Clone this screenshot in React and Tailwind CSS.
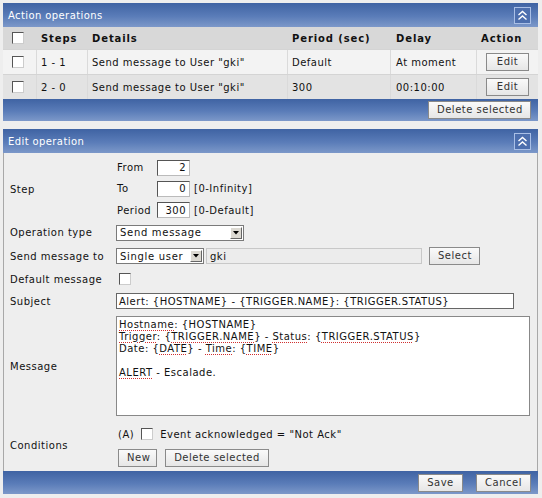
import React from "react";

const headGrad = "bg-[linear-gradient(to_bottom,#3f63a3,#5a7cb8_55%,#7c98c9)]";

function CollapseIcon() {
  return (
    <div className="w-[17px] h-[17px] border border-[#a9bfe6] bg-[#4d6fae] flex items-center justify-center">
      <svg width="11" height="11" viewBox="0 0 11 11" fill="none" stroke="white" strokeWidth="1.4">
        <path d="M1.5 5 L5.5 1.5 L9.5 5" />
        <path d="M1.5 9.5 L5.5 6 L9.5 9.5" />
      </svg>
    </div>
  );
}

function Btn({ children, className = "" }) {
  return (
    <button className={`h-[18px] px-[8px] border border-[#8a8a8a] bg-[linear-gradient(to_bottom,#fafafa,#e6e6e6)] text-[#333] tracking-[0.5px] leading-none whitespace-nowrap ${className}`}>
      {children}
    </button>
  );
}

function Check({ className = "" }) {
  return <span className={`inline-block w-[12px] h-[12px] bg-white border border-t-[#555] border-l-[#555] border-r-[#ccc] border-b-[#ccc] ${className}`} />;
}

function Select({ value, width }) {
  return (
    <div className={`h-[16px] bg-white border border-[#7a7a7a] flex items-center justify-between pl-[3px] pr-[1px] ${width}`}>
      <span className="tracking-[0.7px] whitespace-nowrap">{value}</span>
      <span className="w-[12px] h-[12px] bg-[#dcd9d2] border border-t-white border-l-white border-r-[#666] border-b-[#666] flex items-center justify-center">
        <svg width="6" height="4" viewBox="0 0 6 4"><path d="M0 0 H6 L3 3.5 Z" fill="#000" /></svg>
      </span>
    </div>
  );
}

function NumInput({ value }) {
  return (
    <div className="w-[33px] h-[16px] bg-white border border-t-[#555] border-l-[#555] border-r-[#bbb] border-b-[#bbb] flex items-center justify-end pr-[3px]">{value}</div>
  );
}

const sp = "underline decoration-dotted decoration-[#d03030] underline-offset-2";

const rows = [
  { steps: "1 - 1", details: 'Send message to User "gki"', period: "Default", delay: "At moment", bg: "bg-[#f3f3f3]" },
  { steps: "2 - 0", details: 'Send message to User "gki"', period: "300", delay: "00:10:00", bg: "bg-[#e3e3e3]" },
];

export default function App() {
  return (
    <div className="min-h-screen bg-[#eeeeee] p-[3px] font-['DejaVu_Sans',Verdana,sans-serif] text-[10px] text-[#111] w-[542px] tracking-[0.5px]">
      {/* Action operations */}
      <div className="w-[535px]">
        <div className={`h-[24px] ${headGrad} flex items-center justify-between pl-[5px] pr-[7px] text-white tracking-[0.4px]`}>
          <span>Action operations</span>
          <CollapseIcon />
        </div>
        <div className="flex h-[22px] items-center bg-[#d8d8d8] font-bold tracking-[0.9px]">
          <div className="w-[34px] pl-[9px] flex"><Check /></div>
          <div className="w-[51px] pl-[4px]">Steps</div>
          <div className="w-[200px] pl-[4px]">Details</div>
          <div className="w-[103px] pl-[4px]">Period (sec)</div>
          <div className="w-[86px] pl-[5px]">Delay</div>
          <div className="w-[61px] pl-[4px]">Action</div>
        </div>
        {rows.map((r, i) => (
          <div key={i} className={`flex h-[25px] items-stretch ${r.bg} border-t border-[#d4d4d4]`}>
            <div className="w-[34px] pl-[9px] flex items-center border-r border-[#dadada]"><Check /></div>
            <div className="w-[51px] pl-[4px] flex items-center border-r border-[#dadada]">{r.steps}</div>
            <div className="w-[200px] pl-[4px] flex items-center border-r border-[#dadada]">{r.details}</div>
            <div className="w-[103px] pl-[4px] flex items-center border-r border-[#dadada]">{r.period}</div>
            <div className="w-[86px] pl-[5px] flex items-center border-r border-[#dadada]">{r.delay}</div>
            <div className="w-[61px] flex items-center justify-center"><Btn className="w-[43px] px-0">Edit</Btn></div>
          </div>
        ))}
        <div className={`h-[22px] ${headGrad} flex items-center justify-end pr-[7px]`}>
          <Btn className="w-[103px] px-0">Delete selected</Btn>
        </div>
      </div>

      {/* Edit operation */}
      <div className="w-[535px] mt-[8px]">
        <div className={`h-[24px] ${headGrad} flex items-center justify-between pl-[5px] pr-[7px] text-white tracking-[0.4px]`}>
          <span>Edit operation</span>
          <CollapseIcon />
        </div>
        <div className="border-l border-r border-[#a8a8a8] bg-[#eeeeee] pt-[4px]">
          {/* Step */}
          <div className="flex">
            <div className="w-[112px] pl-[6px] flex items-center">Step</div>
            <div className="flex flex-col">
              <div className="h-[21px] flex items-center">
                <span className="w-[41px] pl-[1px]">From</span>
                <NumInput value="2" />
              </div>
              <div className="h-[21px] flex items-center">
                <span className="w-[41px] pl-[1px]">To</span>
                <NumInput value="0" />
                <span className="ml-[4px]">[0-Infinity]</span>
              </div>
              <div className="h-[22px] flex items-center">
                <span className="w-[41px] pl-[1px]">Period</span>
                <NumInput value="300" />
                <span className="ml-[4px]">[0-Default]</span>
              </div>
            </div>
          </div>
          <div className="flex h-[23px] items-center">
            <div className="w-[112px] pl-[6px]">Operation type</div>
            <Select value="Send message" width="w-[128px]" />
          </div>
          <div className="flex h-[24px] items-center">
            <div className="w-[112px] pl-[6px]">Send message to</div>
            <Select value="Single user" width="w-[88px]" />
            <div className="ml-[2px] w-[216px] h-[16px] bg-[#ececec] border border-[#c8c8c8] flex items-center pl-[3px]">gki</div>
            <Btn className="ml-[7px] w-[51px] px-0">Select</Btn>
          </div>
          <div className="flex h-[22px] items-center">
            <div className="w-[115px] pl-[6px]">Default message</div>
            <Check />
          </div>
          <div className="flex h-[22px] items-center">
            <div className="w-[112px] pl-[6px]">Subject</div>
            <div className="w-[398px] h-[16px] bg-white border border-[#666] flex items-center pl-[2px] whitespace-nowrap">
              Alert: {"{HOSTNAME}"} - {"{TRIGGER.NAME}"}: {"{TRIGGER.STATUS}"}
            </div>
          </div>
          <div className="flex h-[108px] items-center">
            <div className="w-[112px] pl-[6px]">Message</div>
            <div className="w-[414px] h-[100px] bg-white border border-[#888] px-[2px] pt-[2px] leading-[12px]">
              <div><span className={sp}>Hostname</span>: {"{HOSTNAME}"}</div>
              <div>
                <span className={sp}>Trigger</span>: {"{"}<span className={sp}>TRIGGER.NAME</span>{"}"} - <span className={sp}>Status</span>: {"{"}<span className={sp}>TRIGGER.STATUS</span>{"}"}
              </div>
              <div>
                Date: {"{"}<span className={sp}>DATE</span>{"}"} - <span className={sp}>Time</span>: {"{"}<span className={sp}>TIME</span>{"}"}
              </div>
              <div>&nbsp;</div>
              <div><span className={sp}>ALERT</span> - Escalade.</div>
            </div>
          </div>
          <div className="flex h-[51px] items-center">
            <div className="w-[114px] pl-[6px]">Conditions</div>
            <div className="flex flex-col h-full pt-[4px]">
              <div className="h-[20px] flex items-center">
                <span>(A)</span>
                <Check className="ml-[7px]" />
                <span className="ml-[7px]">Event acknowledged = "Not Ack"</span>
              </div>
              <div className="flex mt-[5px] gap-[8px]">
                <Btn className="w-[39px] px-0">New</Btn>
                <Btn className="w-[104px] px-0">Delete selected</Btn>
              </div>
            </div>
          </div>
        </div>
        <div className={`h-[23px] ${headGrad} flex items-center justify-end pr-[7px] gap-[13px]`}>
          <Btn className="w-[45px] px-0">Save</Btn>
          <Btn className="w-[55px] px-0">Cancel</Btn>
        </div>
      </div>
    </div>
  );
}
